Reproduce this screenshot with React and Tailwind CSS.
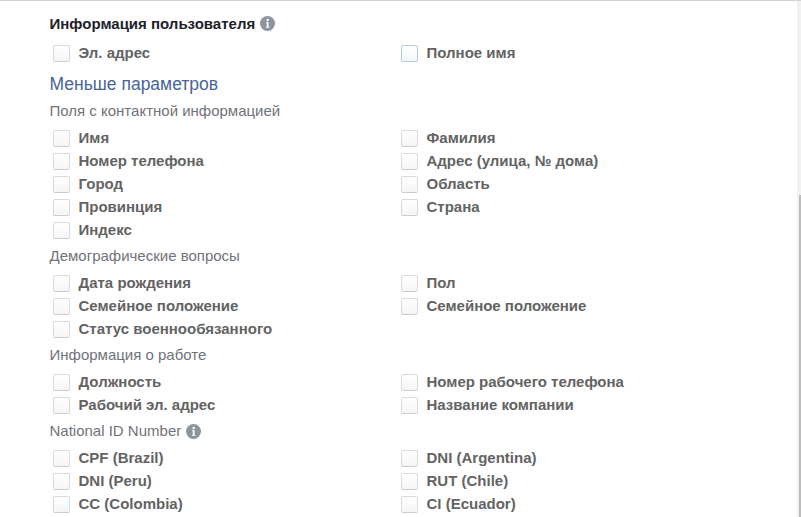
import { useState } from 'react'

const SECTIONS = [
  {
    title: 'Поля с контактной информацией',
    rows: [
      ['Имя', 'Фамилия'],
      ['Номер телефона', 'Адрес (улица, № дома)'],
      ['Город', 'Область'],
      ['Провинция', 'Страна'],
      ['Индекс'],
    ],
  },
  {
    title: 'Демографические вопросы',
    rows: [
      ['Дата рождения', 'Пол'],
      ['Семейное положение', 'Семейное положение'],
      ['Статус военнообязанного'],
    ],
  },
  {
    title: 'Информация о работе',
    rows: [
      ['Должность', 'Номер рабочего телефона'],
      ['Рабочий эл. адрес', 'Название компании'],
    ],
  },
  {
    title: 'National ID Number',
    info: true,
    rows: [
      ['CPF (Brazil)', 'DNI (Argentina)'],
      ['DNI (Peru)', 'RUT (Chile)'],
      ['CC (Colombia)', 'CI (Ecuador)'],
    ],
  },
]

export default function App() {
  return (
    <div className="flex h-[517px] w-[801px] overflow-hidden border-t border-[#d3d3d5] bg-white font-['Liberation_Sans',Arial,sans-serif] text-[15px]">
      <main className="min-w-0 flex-1 pl-[49.5px] pt-[12px]">
        <h2 className="flex h-[23px] items-center gap-[5px] font-bold text-[#1d2129]">
          Информация пользователя
          <InfoIcon className="mb-[2px]" />
        </h2>
        <div className="pt-[6px]">
          <FieldRow labels={['Эл. адрес', 'Полное имя']} focused={1} />
        </div>
        <button className="mt-[6px] block h-[26px] text-[17.5px] leading-[26px] text-[#48649c]">
          Меньше параметров
        </button>
        {/* Field groups */}
        {SECTIONS.map((section) => (
          <Section key={section.title} section={section} />
        ))}
      </main>
      <Scrollbar />
    </div>
  )
}

function Section({ section }) {
  return (
    <section>
      <h3 className="flex h-[30px] items-center gap-[5px] pb-[1px] text-[#6f737a]">
        {section.title}
        {section.info && <InfoIcon />}
      </h3>
      {section.rows.map((labels, i) => (
        <FieldRow key={i} labels={labels} />
      ))}
    </section>
  )
}

function FieldRow({ labels, focused }) {
  return (
    <div className="grid h-[23px] grid-cols-[348px_1fr]">
      {labels.map((label, i) => (
        <Checkbox key={i} label={label} focused={focused === i} />
      ))}
    </div>
  )
}

function Checkbox({ label, focused }) {
  const [checked, setChecked] = useState(false)

  return (
    <label className="flex items-center gap-[9px] pl-[3px] font-bold text-[#636363]">
      <input
        type="checkbox"
        checked={checked}
        onChange={(e) => setChecked(e.target.checked)}
        className={`size-[17px] shrink-0 appearance-none rounded-[2px] border bg-linear-to-b checked:bg-[#4267b2] ${
          focused
            ? 'border-[#b3cdec] from-white to-[#f3f7fc]'
            : 'border-x-[#dadada] border-t-[#dadada] border-b-[#cccccc] from-white to-[#f5f5f5]'
        }`}
      />
      {label}
    </label>
  )
}

function InfoIcon({ className = '' }) {
  return (
    <svg className={`size-[15px] shrink-0 ${className}`} viewBox="0 0 15 15">
      <circle cx="7.5" cy="7.5" r="7.5" fill="#8d949e" />
      <circle cx="7.7" cy="4" r="1.2" fill="#fff" />
      <path d="M6 6.2h2.6v4.6h.8v1H6v-1h.8V7.2H6z" fill="#fff" />
    </svg>
  )
}

function Scrollbar() {
  return (
    <div className="w-[4px] bg-[#f1f1f1] pl-[2px] pt-[194px]">
      <div className="h-full bg-[#bdbdbd]" />
    </div>
  )
}
